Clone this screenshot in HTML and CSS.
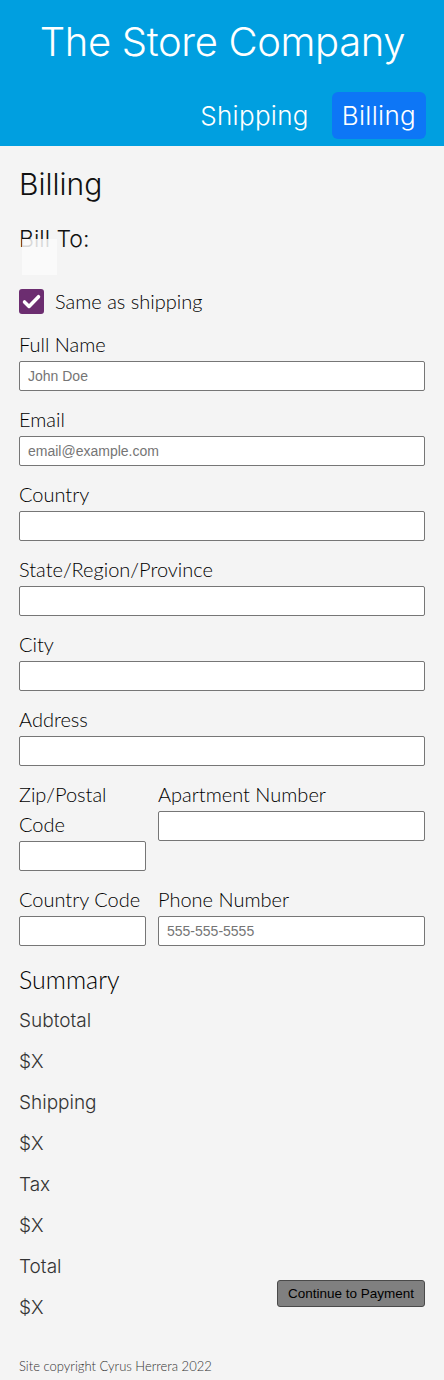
FILE: index.html
```html
<!DOCTYPE html>
<html lang="en">
<head>
<meta charset="utf-8">
<title>The Store Company - Billing</title>
<link rel="stylesheet" href="styles.css">
</head>
<body>
<header class="site-header">
  <h1 class="brand">The Store Company</h1>
  <nav class="nav">
    <a class="nav-link" href="#">Shipping</a>
    <a class="nav-link active" href="#">Billing</a>
  </nav>
</header>
<main class="page">
  <h2 class="page-title">Billing</h2>
  <div class="bill-to">
    <span class="bill-to-text">Bill To:</span>
    <span class="bill-to-veil"></span>
  </div>
  <label class="check-row">
    <span class="checkbox"><svg viewBox="0 0 24 24" width="21" height="21"><path d="M4 12.5l5.2 5.2L20 6.5" fill="none" stroke="#fff" stroke-width="4" stroke-linecap="round" stroke-linejoin="round"/></svg></span>
    <span class="check-label">Same as shipping</span>
  </label>
  <form class="form">
    <div class="field"><label class="label">Full Name</label><input class="input" placeholder="John Doe"></div>
    <div class="field"><label class="label">Email</label><input class="input" placeholder="email@example.com"></div>
    <div class="field"><label class="label">Country</label><input class="input"></div>
    <div class="field"><label class="label">State/Region/Province</label><input class="input"></div>
    <div class="field"><label class="label">City</label><input class="input"></div>
    <div class="field"><label class="label">Address</label><input class="input"></div>
    <div class="field-row">
      <div class="field"><label class="label">Zip/Postal Code</label><input class="input"></div>
      <div class="field"><label class="label">Apartment Number</label><input class="input"></div>
    </div>
    <div class="field-row">
      <div class="field"><label class="label">Country Code</label><input class="input"></div>
      <div class="field"><label class="label">Phone Number</label><input class="input" placeholder="555-555-5555"></div>
    </div>
  </form>
  <section class="summary">
    <h3 class="summary-title">Summary</h3>
    <div class="summary-body">
      <div class="summary-list">
        <div class="summary-line">Subtotal</div>
        <div class="summary-line">$X</div>
        <div class="summary-line">Shipping</div>
        <div class="summary-line">$X</div>
        <div class="summary-line">Tax</div>
        <div class="summary-line">$X</div>
        <div class="summary-line">Total</div>
        <div class="summary-line">$X</div>
      </div>
      <button class="continue" type="button">Continue to Payment</button>
    </div>
  </section>
</main>
<footer class="site-footer">Site copyright Cyrus Herrera 2022</footer>
</body>
</html>
```
FILE: styles.css
```css
* { box-sizing: border-box; }
html, body { margin: 0; padding: 0; }
body {
  background: #f4f4f4;
  color: #111;
  font-family: Lato, "Liberation Sans", sans-serif;
}
.site-header {
  background: #009fe0;
  padding: 18px 18px 7px 19px;
}
.brand {
  margin: 0;
  text-align: center;
  color: #fff;
  font-family: Inter, "Noto Sans", sans-serif;
  font-weight: 300;
  font-size: 40px;
  line-height: 48px;
  letter-spacing: -0.35px;
}
.nav {
  display: flex;
  justify-content: flex-end;
  gap: 13px;
  margin-top: 26px;
}
.nav-link {
  color: #fff;
  text-decoration: none;
  font-family: Inter, "Noto Sans", sans-serif;
  font-weight: 300;
  font-size: 26px;
  line-height: 27px;
  letter-spacing: 0.3px;
  padding: 10px;
  border-radius: 6px;
}
.nav-link.active { background: #0d76f6; }
.page { padding: 0 19px; }
.page-title {
  margin: 0;
  padding-top: 20px;
  font-family: Inter, "Noto Sans", sans-serif;
  font-weight: 300;
  font-size: 30px;
  line-height: 36px;
  color: #111;
}
.bill-to {
  position: relative;
  margin-top: 22px;
  font-family: Inter, "Noto Sans", sans-serif;
  font-weight: 300;
  font-size: 23px;
  line-height: 30px;
  color: #111;
}
.bill-to-veil {
  position: absolute;
  left: 3px;
  top: 15px;
  width: 35px;
  height: 36px;
  background: rgba(250, 250, 250, 0.85);
}
.check-row {
  display: flex;
  align-items: center;
  gap: 11px;
  margin-top: 35px;
}
.checkbox {
  width: 25px;
  height: 25px;
  border-radius: 3px;
  background: #6c2d70;
  display: flex;
  align-items: center;
  justify-content: center;
}
.check-label {
  font-size: 20px;
  font-weight: 300;
  line-height: 25px;
  color: #000;
}
.form { margin-top: 15px; }
.field { margin-bottom: 13px; }
.label {
  display: block;
  font-size: 20px;
  line-height: 30px;
  font-weight: 300;
  color: #000;
}
.input {
  display: block;
  width: 100%;
  height: 30px;
  margin-top: 2px;
  padding: 0 8px;
  border: 1px solid #767676;
  border-radius: 2px;
  background: #fff;
  font-family: "Liberation Sans", Arial, sans-serif;
  font-size: 14px;
}
.input::placeholder { color: #757575; }
.field-row {
  display: grid;
  grid-template-columns: 127px 1fr;
  column-gap: 12px;
}
.summary { margin-top: -1px; }
.summary-title {
  margin: 0;
  font-weight: 300;
  font-size: 25px;
  line-height: 42px;
  color: #000;
}
.summary-body {
  display: flex;
  justify-content: space-between;
  align-items: flex-end;
}
.summary-line {
  font-family: Inter, "Noto Sans", sans-serif;
  font-weight: 300;
  font-size: 19px;
  line-height: 41px;
  color: #333;
}
.continue {
  margin-bottom: 21px;
  height: 27px;
  padding: 0 10px;
  background: #808080;
  border: 1px solid #4a4a4a;
  border-radius: 3px;
  font-family: "Liberation Sans", Arial, sans-serif;
  font-size: 13.5px;
  color: #000;
}
.site-footer {
  padding: 28px 19px 5px;
  font-size: 13px;
  font-weight: 300;
  line-height: 20px;
  color: #333;
}
```
